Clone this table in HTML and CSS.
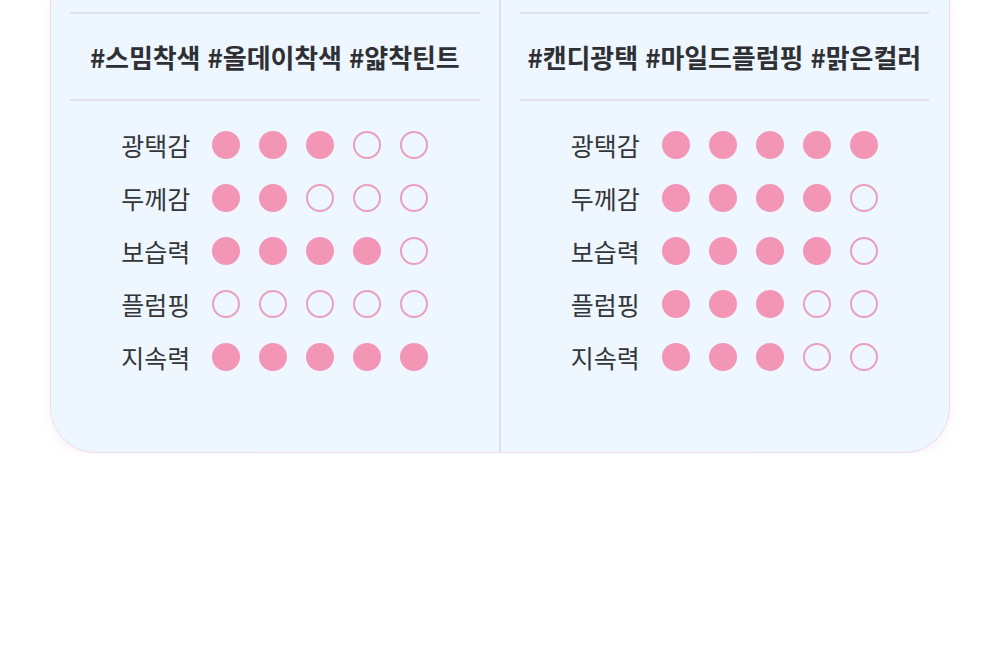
FILE: index.html
```html
<!DOCTYPE html>
<html lang="ko">
<head>
<meta charset="utf-8">
<link rel="stylesheet" href="styles.css">
</head>
<body>
<div class="card">
  <section class="col">
    <h2 class="tags">#스밈착색 #올데이착색 #얇착틴트</h2>
    <div class="rows">
      <div class="row"><span class="label">광택감</span><span class="dot on"></span><span class="dot on"></span><span class="dot on"></span><span class="dot"></span><span class="dot"></span></div>
      <div class="row"><span class="label">두께감</span><span class="dot on"></span><span class="dot on"></span><span class="dot"></span><span class="dot"></span><span class="dot"></span></div>
      <div class="row"><span class="label">보습력</span><span class="dot on"></span><span class="dot on"></span><span class="dot on"></span><span class="dot on"></span><span class="dot"></span></div>
      <div class="row"><span class="label">플럼핑</span><span class="dot"></span><span class="dot"></span><span class="dot"></span><span class="dot"></span><span class="dot"></span></div>
      <div class="row"><span class="label">지속력</span><span class="dot on"></span><span class="dot on"></span><span class="dot on"></span><span class="dot on"></span><span class="dot on"></span></div>
    </div>
  </section>
  <section class="col col-right">
    <h2 class="tags">#캔디광택 #마일드플럼핑 #맑은컬러</h2>
    <div class="rows">
      <div class="row"><span class="label">광택감</span><span class="dot on"></span><span class="dot on"></span><span class="dot on"></span><span class="dot on"></span><span class="dot on"></span></div>
      <div class="row"><span class="label">두께감</span><span class="dot on"></span><span class="dot on"></span><span class="dot on"></span><span class="dot on"></span><span class="dot"></span></div>
      <div class="row"><span class="label">보습력</span><span class="dot on"></span><span class="dot on"></span><span class="dot on"></span><span class="dot on"></span><span class="dot"></span></div>
      <div class="row"><span class="label">플럼핑</span><span class="dot on"></span><span class="dot on"></span><span class="dot on"></span><span class="dot"></span><span class="dot"></span></div>
      <div class="row"><span class="label">지속력</span><span class="dot on"></span><span class="dot on"></span><span class="dot on"></span><span class="dot"></span><span class="dot"></span></div>
    </div>
  </section>
</div>
</body>
</html>
```

FILE: styles.css
```css
html, body {
  margin: 0;
  padding: 0;
  background: #ffffff;
}
body {
  font-family: "Noto Sans CJK KR", "Noto Sans", sans-serif;
  color: #333;
}
.card {
  margin: 0 50px;
  width: 900px;
  box-sizing: border-box;
  display: flex;
  background: #eef6ff;
  border: 1px dotted #efc3da;
  border-top: none;
  border-radius: 0 0 46px 46px;
  box-shadow: 0 4px 8px rgba(245, 205, 225, 0.25);
  height: 453px;
}
.col {
  flex: 1;
  padding: 12px 19px 0 19px;
  box-sizing: border-box;
}
.col-right {
  border-left: 2px solid #dfe0ea;
  padding-left: 19px;
  padding-right: 20px;
}
.tags {
  margin: 0;
  height: 85px;
  border-top: 2px solid #e2e1ed;
  border-bottom: 2px solid #e2e1ed;
  display: flex;
  align-items: center;
  justify-content: center;
  font-size: 26px;
  font-weight: 700;
  letter-spacing: -0.1px;
  color: #2f3033;
}
.rows {
  padding-top: 17px;
  display: flex;
  flex-direction: column;
  align-items: center;
}
.row {
  height: 53px;
  display: flex;
  align-items: center;
  gap: 19px;
}
.label {
  width: 69px;
  margin-right: 3px;
  font-size: 25px;
  letter-spacing: 0;
  white-space: nowrap;
  color: #353638;
  text-align: left;
}
.dot {
  width: 28px;
  height: 28px;
  box-sizing: border-box;
  border-radius: 50%;
  border: 2px solid #e9a0bf;
}
.dot.on {
  background: #f396b6;
  border-color: #f396b6;
}
```
